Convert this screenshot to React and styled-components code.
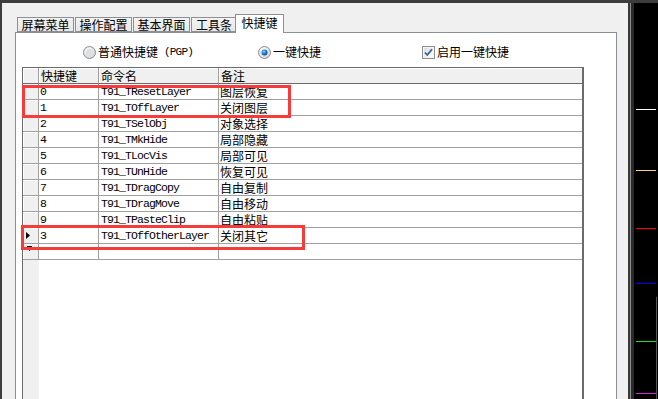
import React from "react";
import styled, { createGlobalStyle } from "styled-components";

const Global = createGlobalStyle`
  html, body { margin: 0; padding: 0; background: #f0f0f0; }
  body { width: 658px; height: 399px; overflow: hidden; }
  * { box-sizing: border-box; }
`;

const CJK = `"Noto Sans CJK SC", "Noto Sans", sans-serif`;
const MONO = `"Liberation Mono", "DejaVu Sans Mono", monospace`;

const Screen = styled.div`
  width: 658px;
  height: 399px;
  display: flex;
  flex-direction: column;
  overflow: hidden;
  background: #f0f0f0;
  font-family: ${CJK};
  font-size: 12px;
  color: #000;
`;

const TopBar = styled.div`
  height: 3px;
  flex: none;
  background: #3d3d3d;
`;

const Body = styled.div`
  flex: 1;
  display: flex;
  min-height: 0;
`;

const LeftEdge = styled.div`
  width: 2px;
  flex: none;
  background: #3d3d3d;
`;

const Dialog = styled.div`
  width: 626px;
  flex: none;
  display: flex;
  flex-direction: column;
  padding: 11px 0 0 13px;
  min-height: 0;
`;

const TabRow = styled.div`
  height: 18px;
  display: flex;
  align-items: flex-end;
  padding-left: 2px;
  flex: none;
`;

const Tab = styled.div`
  width: ${(p) => p.$w}px;
  height: ${(p) => (p.$active ? 19 : 15)}px;
  margin-left: ${(p) => p.$ml || 0}px;
  margin-bottom: ${(p) => (p.$active ? -1 : 0)}px;
  position: relative;
  z-index: ${(p) => (p.$active ? 1 : 0)};
  border: 1px solid #8c8f96;
  border-bottom: ${(p) => (p.$active ? "none" : "1px solid #8c8f96")};
  background: ${(p) => (p.$active ? "#ffffff" : "linear-gradient(#f3f3f3, #e8e8e8)")};
  display: flex;
  align-items: center;
  justify-content: center;
  padding-bottom: ${(p) => (p.$active ? 3 : 0)}px;
  font-size: 12px;
  line-height: 13px;
  white-space: nowrap;
`;

const Page = styled.div`
  width: 602px;
  height: 380px;
  flex: none;
  background: #ffffff;
  border: 1px solid #8c8f96;
  display: flex;
  flex-direction: column;
`;

const OptionRow = styled.div`
  height: 14px;
  margin-top: 12px;
  padding-left: 67px;
  display: flex;
  align-items: center;
  flex: none;
`;

const Option = styled.label`
  width: ${(p) => (p.$w ? `${p.$w}px` : "auto")};
  display: flex;
  align-items: center;
  gap: 2px;
  font-size: 12px;
  line-height: 14px;
  white-space: nowrap;
`;

const Small = styled.span`
  font-family: ${MONO};
  font-size: 11px;
  letter-spacing: -0.8px;
  margin-left: 4px;
`;

const Grid = styled.div`
  position: relative;
  margin: 8px 0 0 6px;
  width: 562px;
  flex: 1;
  display: flex;
  flex-direction: column;
  border-top: 1px solid #6b6b6b;
  border-left: 1px solid #6b6b6b;
  border-right: 2px solid #6b6b6b;
`;

const Row = styled.div`
  display: grid;
  grid-template-columns: 16px 60px 120px 1fr;
  height: 16px;
  flex: none;
`;

const HeadCell = styled.div`
  background: #f0f0f0;
  box-shadow: inset 1px 1px 0 #ffffff;
  border-right: ${(p) => (p.$last ? "none" : "1px solid #a0a0a0")};
  border-bottom: 1px solid #6b6b6b;
  padding-left: 2px;
  font-size: 12px;
  line-height: 15px;
  white-space: nowrap;
  overflow: hidden;
`;

const Indicator = styled.div`
  background: #f0f0f0;
  box-shadow: inset 1px 1px 0 #ffffff;
  border-right: 1px solid #a0a0a0;
  border-bottom: 1px solid #a0a0a0;
  display: flex;
  align-items: stretch;
`;

const Cell = styled.div`
  border-right: ${(p) => (p.$last ? "none" : "1px solid #a0a0a0")};
  border-bottom: 1px solid #a0a0a0;
  padding-left: ${(p) => p.$pl || 1}px;
  font-family: ${(p) => (p.$mono ? MONO : CJK)};
  font-size: ${(p) => (p.$mono ? 11.5 : 12)}px;
  letter-spacing: ${(p) => (p.$mono ? "-0.9px" : "0")};
  line-height: 16px;
  white-space: nowrap;
  overflow: hidden;
`;

const Filler = styled.div`
  flex: 1;
  display: flex;
`;

const FillerStrip = styled.div`
  width: 16px;
  background: #f0f0f0;
`;

const FillerBody = styled.div`
  flex: 1;
  background: #ffffff;
`;

const Mark = styled.div`
  position: absolute;
  left: ${(p) => p.$x}px;
  top: ${(p) => p.$y}px;
  width: ${(p) => p.$w}px;
  height: ${(p) => p.$h}px;
  border: 3px solid #f73b3b;
  pointer-events: none;
`;

const RightStrip = styled.div`
  flex: 1;
  display: flex;
`;

const Gap = styled.div`
  width: ${(p) => p.$w}px;
  flex: none;
  background: ${(p) => p.$c};
`;

const Scope = styled.div`
  flex: 1;
  background: #000;
  display: flex;
`;

const RadioIcon = ({ checked }) => (
  <svg width="13" height="13" viewBox="0 0 13 13">
    <defs>
      <radialGradient id={checked ? "rgOn" : "rgOff"} cx="0.4" cy="0.35" r="0.7">
        <stop offset="0" stopColor="#ffffff" />
        <stop offset="1" stopColor="#cfd1d4" />
      </radialGradient>
      <radialGradient id="dot" cx="0.4" cy="0.35" r="0.7">
        <stop offset="0" stopColor="#8fd3ff" />
        <stop offset="0.5" stopColor="#1f7fd0" />
        <stop offset="1" stopColor="#0d3f7a" />
      </radialGradient>
    </defs>
    <circle cx="6.5" cy="6.5" r="6" fill={`url(#${checked ? "rgOn" : "rgOff"})`} stroke="#8e8f8f" strokeWidth="1" />
    {checked ? <circle cx="6.5" cy="6.5" r="3" fill="url(#dot)" /> : <circle cx="6.5" cy="6.5" r="3.5" fill="#dfe0e2" />}
  </svg>
);

const CheckIcon = () => (
  <svg width="13" height="13" viewBox="0 0 13 13">
    <defs>
      <linearGradient id="cbg" x1="0" y1="0" x2="1" y2="1">
        <stop offset="0" stopColor="#dcdcdc" />
        <stop offset="1" stopColor="#ffffff" />
      </linearGradient>
    </defs>
    <rect x="0.5" y="0.5" width="12" height="12" fill="#f4f4f4" stroke="#8e8f8f" />
    <rect x="2" y="2" width="9" height="9" fill="url(#cbg)" />
    <path d="M3 6.5 L5.3 9 L10 3.3" fill="none" stroke="#2f5fa8" strokeWidth="1.8" />
  </svg>
);

const CurrentGlyph = () => (
  <svg width="15" height="15" viewBox="0 0 15 15">
    <polygon points="3,4 7,7.5 3,11" fill="#000" />
  </svg>
);

const NewRowGlyph = () => (
  <svg width="15" height="15" viewBox="0 0 15 15">
    <rect x="4" y="2" width="5" height="1" fill="#000" />
    <polygon points="4,4 9,4 6.5,7" fill="#000" />
  </svg>
);

const ScopeLines = () => {
  const lines = [
    { y: 106, c: "#ffffff" },
    { y: 167, c: "#f5d27a" },
    { y: 225, c: "#ff0000" },
    { y: 280, c: "#0000ff" },
    { y: 338, c: "#22dd22" },
    { y: 390, c: "#e020e0" },
  ];
  return (
    <svg width="24" height="396" viewBox="0 0 24 396">
      {lines.map((l) => (
        <rect key={l.y} x="2" y={l.y} width="20" height="1" fill={l.c} />
      ))}
      <rect x="22" y="294" width="1" height="102" fill="#555" />
    </svg>
  );
};

const rows = [
  ["0", "T91_TResetLayer", "图层恢复"],
  ["1", "T91_TOffLayer", "关闭图层"],
  ["2", "T91_TSelObj", "对象选择"],
  ["4", "T91_TMkHide", "局部隐藏"],
  ["5", "T91_TLocVis", "局部可见"],
  ["6", "T91_TUnHide", "恢复可见"],
  ["7", "T91_TDragCopy", "自由复制"],
  ["8", "T91_TDragMove", "自由移动"],
  ["9", "T91_TPasteClip", "自由粘贴"],
  ["3", "T91_TOffOtherLayer", "关闭其它", "current"],
  ["", "", "", "new"],
];

export default function App() {
  return (
    <>
      <Global />
      <Screen>
        <TopBar />
        <Body>
          <LeftEdge />
          <Dialog>
            <TabRow>
              <Tab $w={57}>屏幕菜单</Tab>
              <Tab $w={57} $ml={1}>操作配置</Tab>
              <Tab $w={57} $ml={1}>基本界面</Tab>
              <Tab $w={46} $ml={1}>工具条</Tab>
              <Tab $w={49} $ml={-2} $active>快捷键</Tab>
            </TabRow>
            <Page>
              <OptionRow>
                <Option $w={175}>
                  <RadioIcon />
                  普通快捷键<Small>(PGP)</Small>
                </Option>
                <Option $w={164}>
                  <RadioIcon checked />
                  一键快捷
                </Option>
                <Option>
                  <CheckIcon />
                  启用一键快捷
                </Option>
              </OptionRow>
              <Grid>
                <Row>
                  <HeadCell />
                  <HeadCell>快捷键</HeadCell>
                  <HeadCell>命令名</HeadCell>
                  <HeadCell $last>备注</HeadCell>
                </Row>
                {rows.map(([k, cmd, note, kind], i) => (
                  <Row key={i}>
                    <Indicator>
                      {kind === "current" && <CurrentGlyph />}
                      {kind === "new" && <NewRowGlyph />}
                    </Indicator>
                    <Cell $mono>{k}</Cell>
                    <Cell $mono $pl={2}>{cmd}</Cell>
                    <Cell $last>{note}</Cell>
                  </Row>
                ))}
                <Filler>
                  <FillerStrip />
                  <FillerBody />
                </Filler>
                <Mark $x={-1} $y={17} $w={269} $h={33} />
                <Mark $x={-2} $y={157} $w={284} $h={25} />
              </Grid>
            </Page>
          </Dialog>
          <RightStrip>
            <Gap $w={2} $c="#3a3a3a" />
            <Gap $w={1} $c="#8a8a8a" />
            <Gap $w={3} $c="#2a2a2a" />
            <Scope>
              <ScopeLines />
            </Scope>
          </RightStrip>
        </Body>
      </Screen>
    </>
  );
}
